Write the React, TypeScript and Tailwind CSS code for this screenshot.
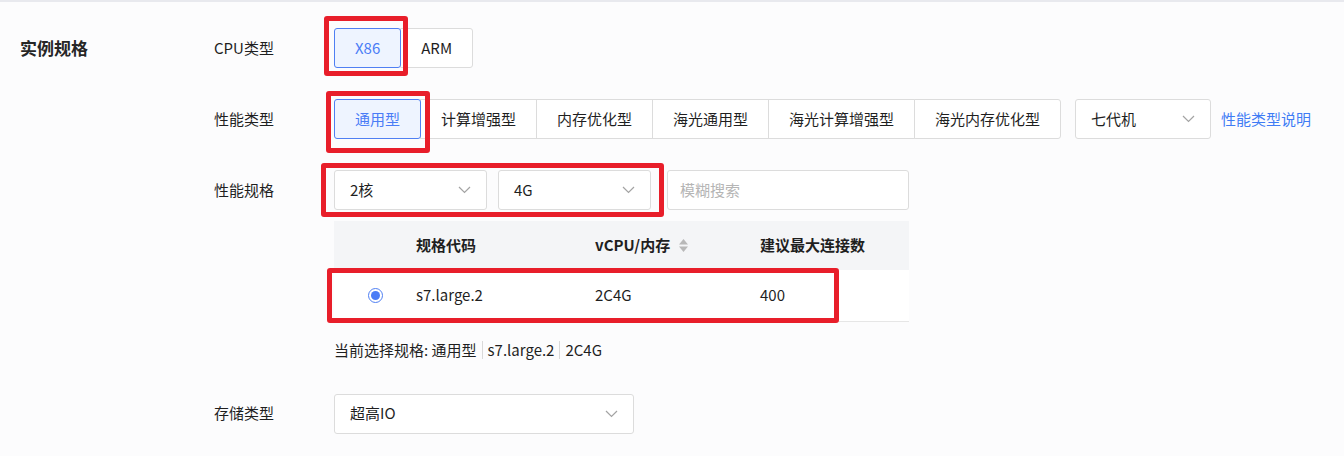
import { useState } from 'react';

const FONT = { fontFamily: '"Noto Sans CJK SC", "Noto Sans", sans-serif' };

const CPU_TYPES = ['X86', 'ARM'];
const PERF_TYPES = ['通用型', '计算增强型', '内存优化型', '海光通用型', '海光计算增强型', '海光内存优化型'];

function Chevron() {
  return (
    <svg width="13" height="8" viewBox="0 0 13 8" className="shrink-0">
      <polyline points="1,1 6.5,6.5 12,1" fill="none" stroke="#a3a3a3" strokeWidth="1.2" />
    </svg>
  );
}

function SortIcon() {
  return (
    <svg width="11" height="15" viewBox="0 0 11 15" className="ml-[8px]">
      <polygon points="5.5,1 10,6.5 1,6.5" fill="#b8b8b8" />
      <polygon points="1,8.5 10,8.5 5.5,14" fill="#b8b8b8" />
    </svg>
  );
}

function Select({ value, width }: { value: string; width: string }) {
  return (
    <div
      className={`flex h-10 items-center justify-between rounded-[3px] border border-[#dcdcdc] bg-white pl-[15px] pr-[15px] text-[15px] text-[#1f1f1f] ${width}`}
    >
      <span>{value}</span>
      <Chevron />
    </div>
  );
}

function ButtonGroup({ items, active, onPick }: { items: string[]; active: string; onPick: (v: string) => void }) {
  return (
    <div className="flex">
      {items.map((it, i) => {
        const on = it === active;
        return (
          <button
            key={it}
            onClick={() => onPick(it)}
            className={`relative h-10 border px-5 text-[15px] ${i > 0 ? '-ml-px' : ''} ${
              i === 0 ? 'rounded-l-[3px]' : ''
            } ${i === items.length - 1 ? 'rounded-r-[3px]' : ''} ${
              on
                ? 'z-10 rounded-[3px] border-[#4f7ff3] bg-[#eef4ff] text-[#4a7cf6]'
                : 'border-[#dcdcdc] bg-white text-[#1f1f1f]'
            }`}
          >
            {it}
          </button>
        );
      })}
    </div>
  );
}

function Row({ label, children }: { label: string; children: React.ReactNode }) {
  return (
    <div className="flex items-start">
      <div className="flex h-10 w-[120px] shrink-0 items-center text-[15px] text-[#1f1f1f]">{label}</div>
      {children}
    </div>
  );
}

export default function App() {
  const [cpu, setCpu] = useState('X86');
  const [perf, setPerf] = useState('通用型');

  return (
    <div style={FONT} className="relative h-[456px] w-[1344px] overflow-hidden bg-[#fcfcfd]">
      <div className="h-[2px] bg-[#e8e9ee]" />

      <div className="flex pt-[26px]">
        <div className="flex h-10 w-[214px] shrink-0 items-center pl-5 text-[17px] font-bold text-[#262626]">
          实例规格
        </div>

        <div className="flex flex-col gap-[31px]">
          <Row label="CPU类型">
            <ButtonGroup items={CPU_TYPES} active={cpu} onPick={setCpu} />
          </Row>

          <Row label="性能类型">
            <div className="flex items-center">
              <ButtonGroup items={PERF_TYPES} active={perf} onPick={setPerf} />
              <div className="ml-[14px]">
                <Select value="七代机" width="w-[136px]" />
              </div>
              <a className="ml-[10px] text-[15px] text-[#3f7cf5]">性能类型说明</a>
            </div>
          </Row>

          <Row label="性能规格">
            <div className="flex w-[575px] flex-col">
              <div className="flex gap-[11px]">
                <Select value="2核" width="w-[153px]" />
                <Select value="4G" width="w-[153px]" />
                <div className="ml-[5px] flex h-10 w-[242px] items-center rounded-[3px] border border-[#dcdcdc] bg-white pl-3 text-[15px] text-[#b5b5b5]">
                  模糊搜索
                </div>
              </div>

              <div className="mt-[11px] flex h-[49px] items-center bg-[#f4f5f7] text-[15px] font-bold text-[#1f1f1f]">
                <div className="w-[82px]" />
                <div className="w-[179px]">规格代码</div>
                <div className="flex w-[165px] items-center">
                  vCPU/内存
                  <SortIcon />
                </div>
                <div className="w-[149px]">建议最大连接数</div>
              </div>
              <div className="flex h-[52px] items-center border-b border-[#e6e6e6] bg-white text-[15px] text-[#1f1f1f]">
                <div className="flex w-[82px] justify-center">
                  <span className="flex h-[15px] w-[15px] items-center justify-center rounded-full border border-[#4f7ff3] bg-white">
                    <span className="h-[9px] w-[9px] rounded-full bg-[#4a7cf6]" />
                  </span>
                </div>
                <div className="w-[179px]">s7.large.2</div>
                <div className="w-[165px]">2C4G</div>
                <div className="w-[149px]">400</div>
              </div>

              <div className="mt-[17px] flex items-center text-[15px] text-[#1f1f1f]">
                <span>当前选择规格: 通用型</span>
                <span className="mx-[5px] h-[18px] w-px bg-[#d9d9d9]" />
                <span>s7.large.2</span>
                <span className="mx-[5px] h-[18px] w-px bg-[#d9d9d9]" />
                <span>2C4G</span>
              </div>
            </div>
          </Row>

          <div className="mt-[1px]">
            <Row label="存储类型">
              <Select value="超高IO" width="w-[300px]" />
            </Row>
          </div>
        </div>
      </div>

      {/* red annotation boxes */}
      <div className="pointer-events-none absolute left-[324px] top-[16px] h-[60px] w-[84px] rounded-[3px] border-[5px] border-[#e81e2a]" />
      <div className="pointer-events-none absolute left-[326px] top-[91px] h-[62px] w-[104px] rounded-[3px] border-[5px] border-[#e81e2a]" />
      <div className="pointer-events-none absolute left-[321px] top-[163px] h-[54px] w-[343px] rounded-[3px] border-[5px] border-[#e81e2a]" />
      <div className="pointer-events-none absolute left-[327px] top-[268px] h-[55px] w-[512px] rounded-[3px] border-[5px] border-[#e81e2a]" />
    </div>
  );
}
